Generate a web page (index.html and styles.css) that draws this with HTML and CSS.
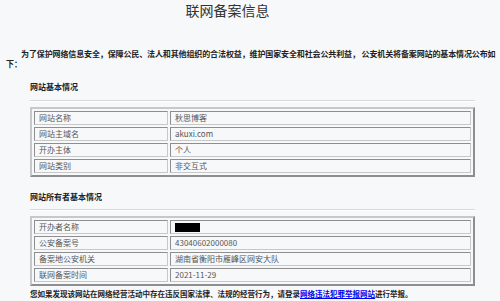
FILE: index.html
```html
<!DOCTYPE html>
<html lang="zh">
<head>
<meta charset="utf-8">
<title>联网备案信息</title>
<link rel="stylesheet" href="styles.css">
</head>
<body>
<h1 class="title">联网备案信息</h1>
<p class="intro">为了保护网络信息安全，保障公民、法人和其他组织的合法权益，维护国家安全和社会公共利益， 公安机关将备案网站的基本情况公布如下：</p>
<div class="section">
  <h2 class="sec-title">网站基本情况</h2>
  <div class="rule"></div>
  <table class="info">
    <tr><td class="k">网站名称</td><td class="v">秋思博客</td></tr>
    <tr><td class="k">网站主域名</td><td class="v">akuxi.com</td></tr>
    <tr><td class="k">开办主体</td><td class="v">个人</td></tr>
    <tr><td class="k">网站类别</td><td class="v">非交互式</td></tr>
  </table>
  <h2 class="sec-title sec2">网站所有者基本情况</h2>
  <div class="rule"></div>
  <table class="info">
    <tr><td class="k">开办者名称</td><td class="v"><span class="redact"></span></td></tr>
    <tr><td class="k">公安备案号</td><td class="v">43040602000080</td></tr>
    <tr><td class="k">备案地公安机关</td><td class="v">湖南省衡阳市雁峰区网安大队</td></tr>
    <tr><td class="k">联网备案时间</td><td class="v">2021-11-29</td></tr>
  </table>
  <p class="note">您如果发现该网站在网络经营活动中存在违反国家法律、法规的经营行为，请登录<a href="#">网络违法犯罪举报网站</a>进行举报。</p>
</div>
</body>
</html>
```
FILE: styles.css
```css
html, body {
  margin: 0;
  padding: 0;
  background: #f7f8fa;
}
body {
  font-family: "Noto Sans CJK SC", "Noto Sans", sans-serif;
  color: #333;
  font-size: 8px;
}
.title {
  margin: 0;
  padding: 1px 45px 0 0;
  font-size: 14px;
  line-height: 18px;
  font-weight: normal;
  text-align: center;
  color: #333;
}
.intro {
  margin: 30px 0 0 6px;
  text-indent: 15px;
  font-size: 8px;
  line-height: 10px;
  font-weight: bold;
  letter-spacing: -0.12px;
  color: #222;
}
.section {
  padding: 0 25px 0 30px;
}
.sec-title {
  margin: 13px 0 0 0;
  font-size: 8px;
  line-height: 10px;
  font-weight: bold;
  color: #222;
}
.sec2 {
  margin-top: 15px;
}
.rule {
  margin-top: 8px;
  border-top: 1px solid #d8d8d8;
  border-bottom: 1px solid #fff;
  margin-bottom: 5px;
}
.sec2 + .rule {
  margin-top: 7px;
}
.info {
  width: 100%;
  border: 2px solid;
  border-color: #c8c8c8 #8e8e8e #8e8e8e #c8c8c8;
  border-spacing: 2px;
}
.info td {
  height: 12px;
  padding: 0 4px;
  border: 1px solid;
  border-color: #8e8e8e #c8c8c8 #c8c8c8 #8e8e8e;
  font-size: 8px;
  line-height: 12px;
  color: #555;
}
.info td.k {
  width: 124px;
}
.redact {
  display: inline-block;
  width: 25px;
  height: 9px;
  background: #000;
  vertical-align: middle;
}
.note {
  margin: 3px 0 0 0;
  font-size: 7.5px;
  line-height: 10px;
  font-weight: bold;
  color: #222;
}
.note a {
  color: #0000ee;
  text-decoration: underline;
}
```
